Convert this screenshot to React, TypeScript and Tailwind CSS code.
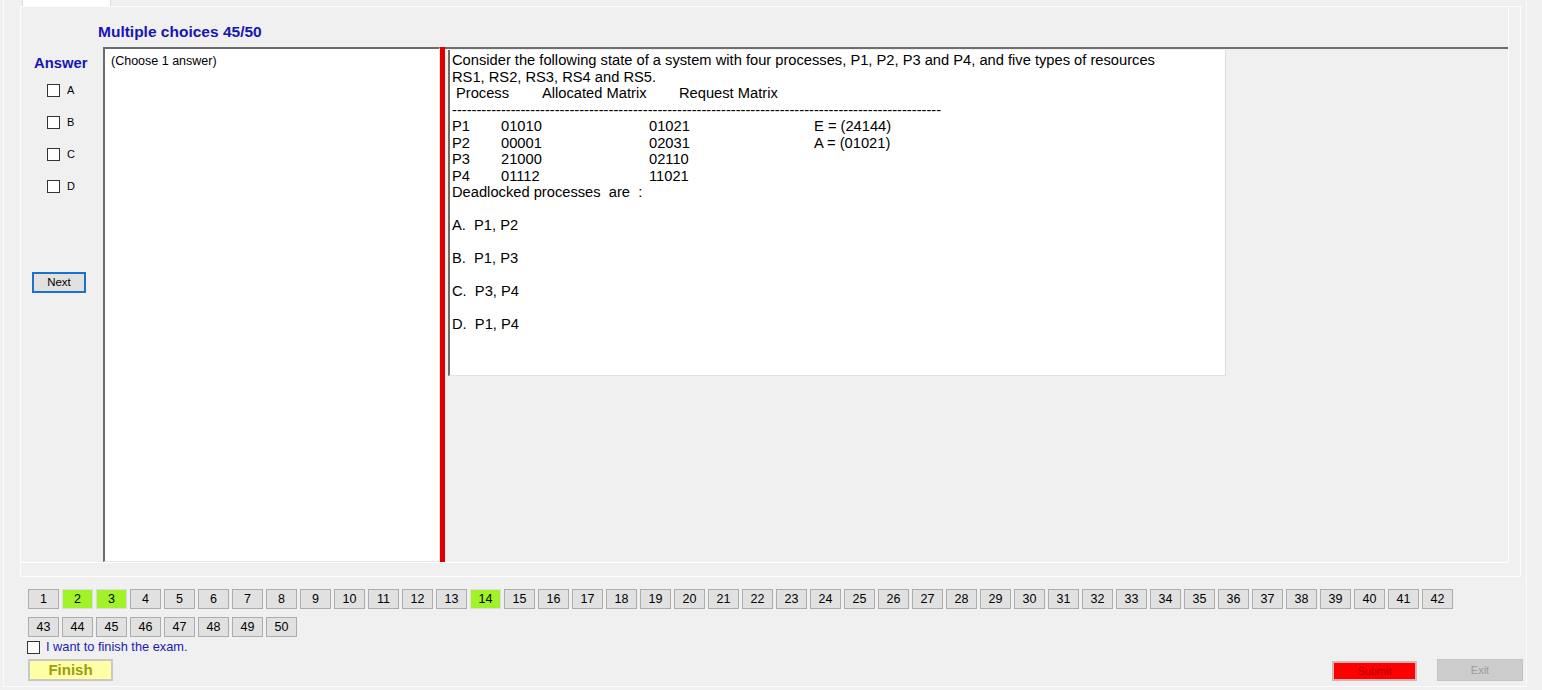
import React from "react";

const rows = [
  ["P1", "01010", "01021", "E = (24144)"],
  ["P2", "00001", "02031", "A = (01021)"],
  ["P3", "21000", "02110", ""],
  ["P4", "01112", "11021", ""],
];

const options = ["A.  P1, P2", "B.  P1, P3", "C.  P3, P4", "D.  P1, P4"];

const answered = [2, 3, 14];

function Box() {
  return <span className="block h-[13px] w-[13px] shrink-0 border border-[#333333] bg-white" />;
}

function NavButton({ n }: { n: number }) {
  const done = answered.includes(n);
  return (
    <button
      type="button"
      className={
        "flex h-[20px] w-[31px] shrink-0 items-center justify-center border text-[12.5px] text-black " +
        (done ? "border-[#dcdcdc] bg-[#a2f22a]" : "border-[#adadad] bg-[#e1e1e1]")
      }
    >
      {n}
    </button>
  );
}

export default function App() {
  const first = Array.from({ length: 42 }, (_, i) => i + 1);
  const second = Array.from({ length: 8 }, (_, i) => i + 43);

  return (
    <div className="h-[690px] w-[1542px] overflow-hidden bg-[#f0f0f0] font-['Liberation_Sans',Arial,sans-serif] text-black">
      <div className="ml-[3px] h-[687px] w-[1524px] border-x border-b border-[#fbfbfb]">
        {/* tab strip */}
        <div className="flex h-[6px]">
          <div className="ml-[18px] h-[6px] w-[89px] border-x border-[#d9d9d9] bg-white" />
        </div>

        {/* tab page */}
        <div className="ml-[16px] h-[571px] w-[1501px] border border-[#fcfcfc]">
          <div className="h-[556px] w-[1488px] border-b border-r border-white">
            <div className="h-[40px] pl-[77px] pt-[16px] text-[15.5px] font-bold leading-[17px] text-[#1616b2]">
              Multiple choices 45/50
            </div>

            <div className="flex h-[515px]">
              {/* answer column */}
              <div className="w-[82px] shrink-0">
                <div className="pl-[13px] pt-[8px] text-[14.8px] font-bold leading-[16px] text-[#1616b2]">
                  Answer
                </div>
                <div className="mt-[13px] pl-[26px]">
                  {["A", "B", "C", "D"].map((l) => (
                    <div key={l} className="flex h-[32px] items-start gap-[7px]">
                      <Box />
                      <span className="text-[11px] leading-[13px]">{l}</span>
                    </div>
                  ))}
                </div>
                <button
                  type="button"
                  className="ml-[11px] mt-[60px] flex h-[21px] w-[54px] items-center justify-center border-2 border-[#1a73c9] bg-[#e1e1e1] text-[11.5px]"
                >
                  Next
                </button>
              </div>

              {/* answer text box */}
              <div className="w-[337px] shrink-0 border-b border-l-2 border-r border-t-2 border-b-[#e6e6e6] border-l-[#6b6b6b] border-r-[#e6e6e6] border-t-[#6b6b6b] bg-white pl-[6px] pt-[5px] text-[12.5px] leading-[14px]">
                (Choose 1 answer)
              </div>

              {/* splitter */}
              <div className="w-[5px] shrink-0 bg-[#e00000]" />

              {/* question pane */}
              <div className="flex-1 border-t-2 border-[#6e6e6e] pl-[3px] pt-[1px]">
                <div className="h-[326px] w-[778px] border-b border-l-2 border-r border-b-[#e3e3e3] border-l-[#6e6e6e] border-r-[#dcdcdc] bg-white pl-[2px] pt-[2px] text-[14.7px] leading-[16.5px]">
                  <div className="whitespace-nowrap">
                    Consider the following state of a system with four processes, P1, P2, P3 and P4, and five types of resources
                  </div>
                  <div>RS1, RS2, RS3, RS4 and RS5.</div>
                  <div className="flex pl-[4px]">
                    <span className="w-[86px]">Process</span>
                    <span className="w-[137px]">Allocated Matrix</span>
                    <span>Request Matrix</span>
                  </div>
                  <div className="whitespace-nowrap">{"-".repeat(100)}</div>
                  {rows.map((r) => (
                    <div key={r[0]} className="flex">
                      <span className="w-[49px]">{r[0]}</span>
                      <span className="w-[148px]">{r[1]}</span>
                      <span className="w-[165px]">{r[2]}</span>
                      <span>{r[3]}</span>
                    </div>
                  ))}
                  <div className="whitespace-pre">Deadlocked processes  are  :</div>
                  {options.map((o) => (
                    <div key={o} className="whitespace-pre pt-[16.5px]">
                      {o}
                    </div>
                  ))}
                </div>
              </div>
            </div>
          </div>
        </div>

        {/* question navigation */}
        <div className="mt-[12px] pl-[24px]">
          <div className="flex gap-[3px]">
            {first.map((n) => (
              <NavButton key={n} n={n} />
            ))}
          </div>
          <div className="mt-[8px] flex gap-[3px]">
            {second.map((n) => (
              <NavButton key={n} n={n} />
            ))}
          </div>
        </div>

        <div className="ml-[23px] mt-[3px] flex items-center gap-[6px]">
          <Box />
          <span className="text-[12.8px] leading-[14px] text-[#1a1ab0]">I want to finish the exam.</span>
        </div>

        <div className="ml-[24px] mt-[5px] flex items-end">
          <button
            type="button"
            className="flex h-[22px] w-[85px] items-center justify-center border-2 border-[#c8c8c8] bg-[#ffffa6] text-[15px] font-bold text-[#9c9c14]"
          >
            Finish
          </button>
          <button
            type="button"
            className="ml-[1219px] flex h-[20px] w-[85px] items-center justify-center border-2 border-[#d8b4b4] bg-[#ff0000] text-[11px] text-[#b00000]"
          >
            Submit
          </button>
          <button
            type="button"
            className="ml-[20px] flex h-[22px] w-[86px] items-center justify-center border border-[#c4c4c4] bg-[#cccccc] text-[11px] text-[#9c9c9c]"
          >
            Exit
          </button>
        </div>
      </div>
    </div>
  );
}
